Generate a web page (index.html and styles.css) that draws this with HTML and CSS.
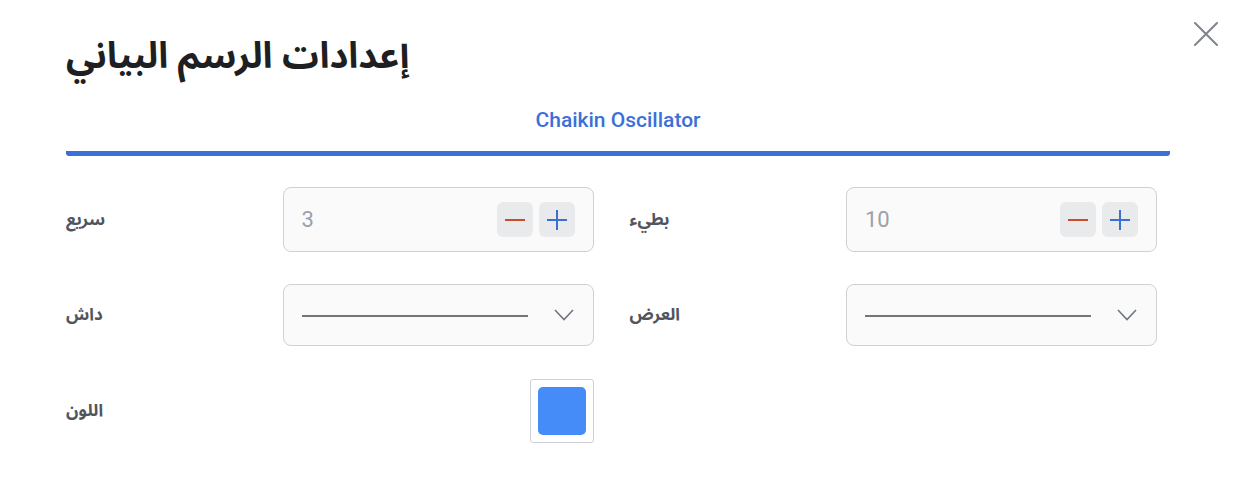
FILE: index.html
```html
<!DOCTYPE html>
<html lang="ar">
<head>
<meta charset="utf-8">
<title>إعدادات الرسم البياني</title>
<link rel="stylesheet" href="styles.css">
</head>
<body>
<div class="dialog">
  <button class="close" aria-label="close">
    <svg width="24" height="24" viewBox="0 0 24 24"><path d="M1 1 L23 23 M23 1 L1 23" stroke="#80848c" stroke-width="2" fill="none" stroke-linecap="round"/></svg>
  </button>
  <h1 class="title">إعدادات الرسم البياني</h1>
  <div class="tabs"><div class="tab">Chaikin Oscillator</div></div>
  <div class="form">
    <div class="field">
      <span class="label">سريع</span>
      <div class="num">
        <span class="num-value">3</span>
        <div class="steps">
          <span class="step"><svg width="20" height="20" viewBox="0 0 20 20"><path d="M0 10 H20" stroke="#cc4b2c" stroke-width="2"/></svg></span>
          <span class="step"><svg width="20" height="20" viewBox="0 0 20 20"><path d="M0 10 H20 M10 0 V20" stroke="#3b6fd0" stroke-width="2"/></svg></span>
        </div>
      </div>
    </div>
    <div class="field">
      <span class="label">بطيء</span>
      <div class="num">
        <span class="num-value">10</span>
        <div class="steps">
          <span class="step"><svg width="20" height="20" viewBox="0 0 20 20"><path d="M0 10 H20" stroke="#cc4b2c" stroke-width="2"/></svg></span>
          <span class="step"><svg width="20" height="20" viewBox="0 0 20 20"><path d="M0 10 H20 M10 0 V20" stroke="#3b6fd0" stroke-width="2"/></svg></span>
        </div>
      </div>
    </div>
    <div class="field">
      <span class="label">داش</span>
      <div class="select">
        <span class="line"></span>
        <svg class="chev" width="20" height="12" viewBox="0 0 20 12"><path d="M1 1 L10 10.5 L19 1" stroke="#70757f" stroke-width="1.6" fill="none"/></svg>
      </div>
    </div>
    <div class="field">
      <span class="label">العرض</span>
      <div class="select">
        <span class="line"></span>
        <svg class="chev" width="20" height="12" viewBox="0 0 20 12"><path d="M1 1 L10 10.5 L19 1" stroke="#70757f" stroke-width="1.6" fill="none"/></svg>
      </div>
    </div>
    <div class="field field-color">
      <span class="label">اللون</span>
      <div class="swatch"><span class="swatch-fill"></span></div>
    </div>
  </div>
</div>
</body>
</html>
```

FILE: styles.css
```css
* { box-sizing: border-box; }
html, body { margin: 0; background: #ffffff; }
body {
  font-family: "Noto Sans Arabic", "Noto Naskh Arabic", "DejaVu Sans", Roboto, sans-serif;
  width: 1242px;
  height: 496px;
  overflow: hidden;
}
.dialog {
  position: relative;
  padding: 0 72px 0 66px;
}
.close {
  position: absolute;
  top: 22px;
  right: 24px;
  width: 24px;
  height: 24px;
  padding: 0;
  border: 0;
  background: transparent;
  display: flex;
}
.title {
  margin: 0;
  padding-top: 33px;
  font-size: 36.5px;
  line-height: 48px;
  font-weight: 700;
  color: #1d1f23;
  text-align: left;
}
.tabs {
  margin-top: 25px;
  display: flex;
  justify-content: center;
  border-bottom: 5px solid #3b6fd6;
  border-radius: 3px;
}
.tab {
  font-family: Roboto, "Noto Sans", sans-serif;
  font-weight: 500;
  font-size: 21px;
  line-height: 28px;
  color: #3b70d8;
  padding: 0 0 17px;
}
.form {
  margin-top: 31px;
  margin-right: 13px;
  display: grid;
  grid-template-columns: 1fr 1fr;
  column-gap: 36px;
  row-gap: 32px;
}
.field {
  display: flex;
  align-items: center;
  justify-content: space-between;
}
.field-color { margin-top: 1px; }
.label {
  font-size: 17px;
  font-weight: 700;
  color: #51555d;
}
.num, .select {
  width: 311px;
  border: 1px solid #cfd0d4;
  border-radius: 8px;
  background: #fafafa;
  display: flex;
  align-items: center;
}
.num {
  height: 65px;
  padding: 0 18px 0 18px;
  justify-content: space-between;
}
.num-value {
  font-family: Roboto, sans-serif;
  font-size: 22px;
  color: #9ca0a8;
}
.steps {
  display: flex;
  gap: 6px;
}
.step {
  width: 36px;
  height: 35px;
  border-radius: 6px;
  background: #e9eaec;
  display: flex;
  align-items: center;
  justify-content: center;
}
.select {
  height: 62px;
  padding: 0 19px 0 18px;
  justify-content: space-between;
}
.line {
  width: 226px;
  height: 2px;
  background: #757575;
  margin-top: 1px;
}
.chev { display: block; }
.swatch {
  width: 64px;
  height: 64px;
  border: 1px solid #cfd0d4;
  border-radius: 3px;
  padding: 7px;
  background: #fff;
}
.swatch-fill {
  display: block;
  width: 100%;
  height: 100%;
  border-radius: 5px;
  background: #458cf8;
}
```
